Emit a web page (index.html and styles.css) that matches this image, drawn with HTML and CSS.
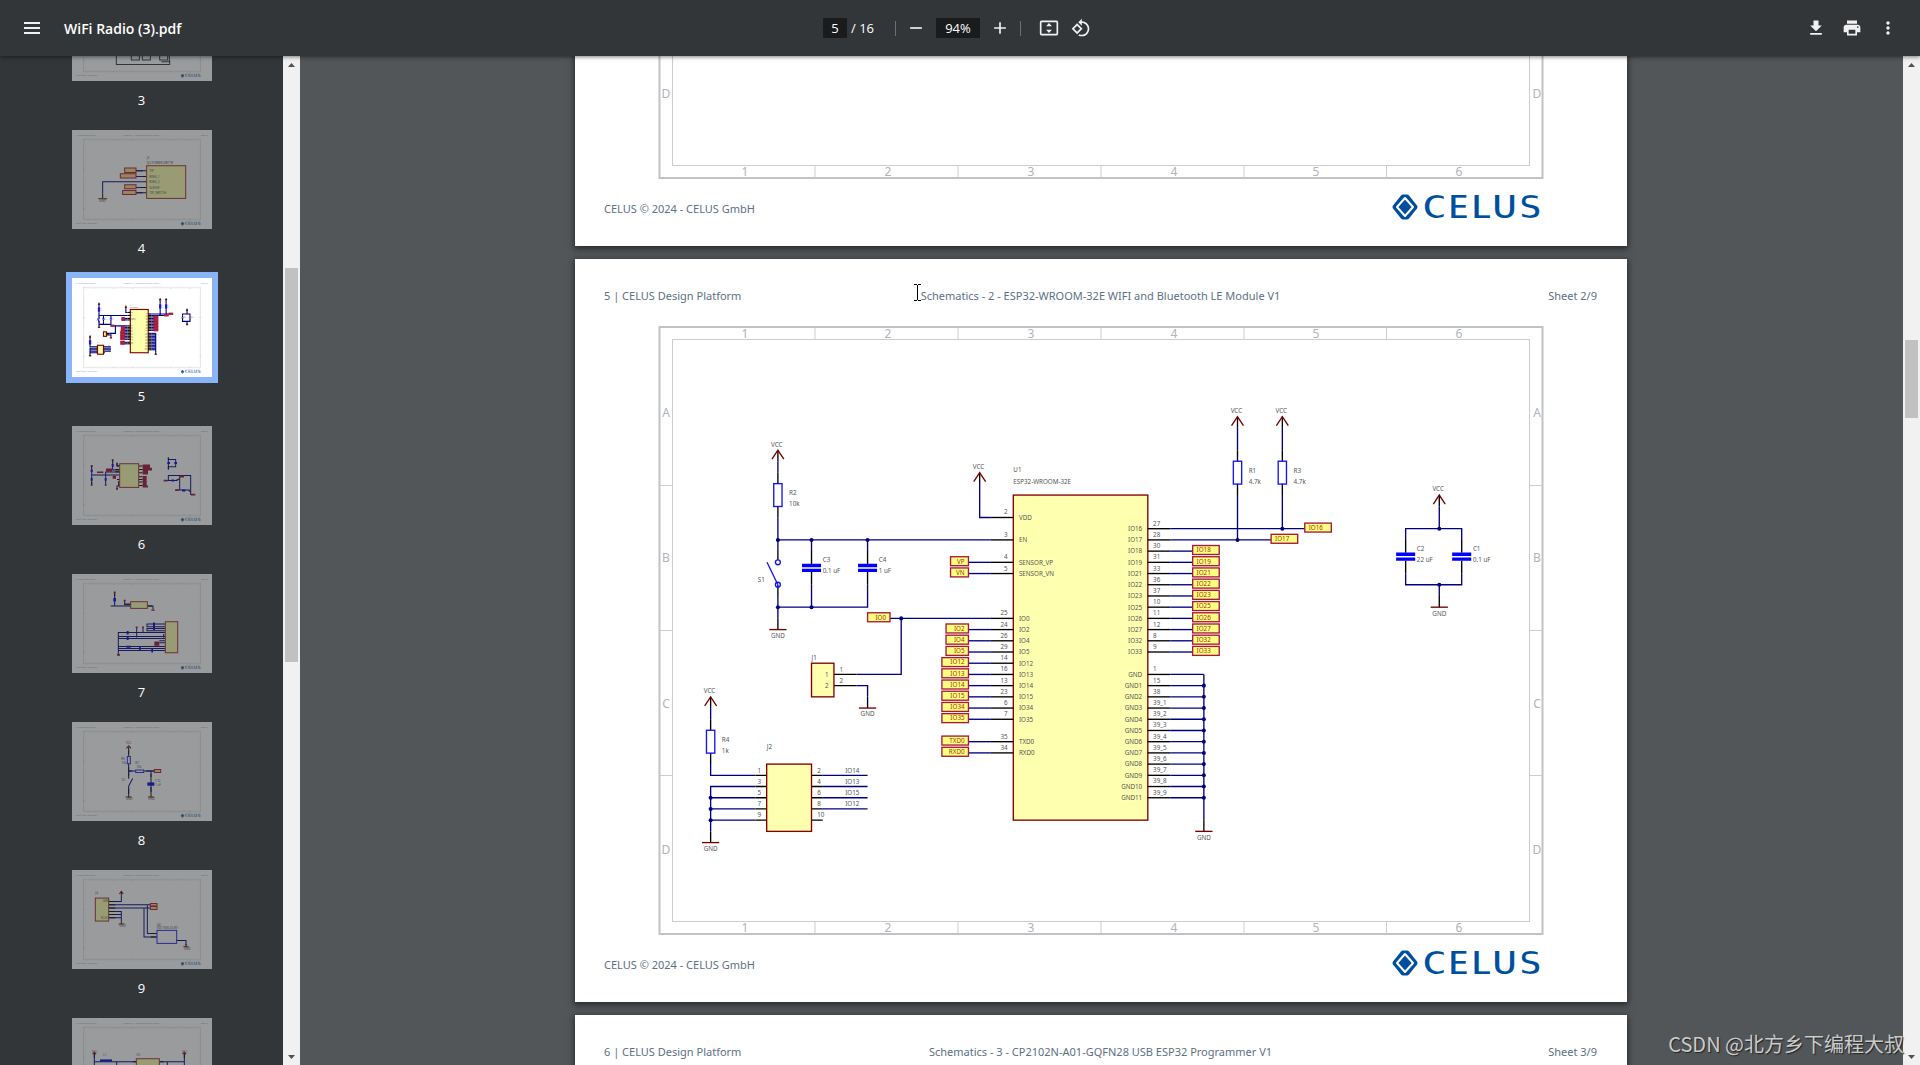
FILE: index.html
```
<!DOCTYPE html>
<html lang="en">
<head>
    <meta charset="UTF-8">
    <meta name="viewport" content="width=device-width, initial-scale=1.0">
    <title>WiFi Radio (3).pdf</title>
    <link rel="stylesheet" href="styles.css">
</head>
<body>

    <!-- shared drawings -->
    <svg class="defs" width="0" height="0" aria-hidden="true">
        <defs>
            <g id="frame">
                <rect class="frame-outer" x="84.500" y="68" width="883" height="607"/>
                <rect class="frame-inner" x="97.500" y="80.500" width="857" height="582"/>
                <path class="frame-tick" d="M240 68V80M383 68V80M526 68V80M669 68V80M811.500 68V80M240 663V675M383 663V675M526 663V675M669 663V675M811.500 663V675M85 226.500H97M85 371.500H97M85 516.500H97M955 226.500H967M955 371.500H967M955 516.500H967"/>
                <g class="frame-text">
                    <text x="170" y="79">1</text><text x="313" y="79">2</text><text x="456" y="79">3</text><text x="599" y="79">4</text><text x="741" y="79">5</text><text x="884" y="79">6</text>
                    <text x="170" y="673">1</text><text x="313" y="673">2</text><text x="456" y="673">3</text><text x="599" y="673">4</text><text x="741" y="673">5</text><text x="884" y="673">6</text>
                    <text x="91" y="158">A</text><text x="91" y="303">B</text><text x="91" y="449">C</text><text x="91" y="595">D</text>
                    <text x="962" y="158">A</text><text x="962" y="303">B</text><text x="962" y="449">C</text><text x="962" y="595">D</text>
                </g>
            </g>

            <g id="logo">
                <path d="M11 .500h4a3 3 0 0 1 2 1l8 10a2.500 2.500 0 0 1 0 3l-8 10a3 3 0 0 1-2 1h-4a3 3 0 0 1-2-1l-8-10a2.500 2.500 0 0 1 0-3l8-10a3 3 0 0 1 2-1z" fill="#004f9e"/>
                <path d="M13 4L21 13L13 22L5 13z" fill="#004f9e" stroke="#fff" stroke-width="2" stroke-linejoin="round"/>
                <text class="logo-text" x="30" y="25">CELUS</text>
            </g>

            <!-- schematic parts, in mil -->
            <g id="vcc">
                <text class="part mid" x="-10" y="-32">VCC</text>
                <path class="pin" d="M0 0V100"/>
                <path class="power" d="M-53 80L0 0L53 80"/>
            </g>
            <g id="gnd">
                <path class="pin" d="M0 -100V0"/>
                <path class="power" d="M-77 0H77"/>
                <text class="part mid" x="0" y="75">GND</text>
            </g>
            <g id="res">
                <path class="pin" d="M0 -200V-100M0 100V200"/>
                <rect class="body" x="-37" y="-102" width="74" height="204"/>
            </g>
            <g id="cap">
                <path class="pin" d="M0 -150V-36M0 36V150"/>
                <path class="plate" d="M-85 -37H85V-7H-85zM-85 7H85V37H-85z"/>
            </g>

            <g id="sheet5" transform="translate(438.300 269.700) scale(.1121)">
                <path class="wire" d="M-2100 -600V-500M-2100 -100V200M-2100 100H-200M-1800 100V200M-1300 100V200M-1800 500V700M-1300 500V700H-2100M-2100 600V800"/>
                <path class="wire" d="M-300 -400V-100H-200M-1100 800H-200M-1000 800V1300H-1400M-1400 1400H-1300V1500"/>
                <path class="wire" d="M-2700 1600V1700M-2700 2100V2200H-2300M-2300 2300H-2700V2700M-2700 2400H-2300M-2700 2500H-2300M-2700 2600H-2300M-1700 2200H-1300M-1700 2300H-1300M-1700 2400H-1300M-1700 2500H-1300"/>
                <path class="wire" d="M1400 0H2600M1400 100H2300M2000 -900V-700M2000 -300V100M2400 -900V-700M2400 -300V0M1700 1300V2600"/>
                <path class="wire" d="M3800 -200V0M3500 100V0H4000V100M3500 400V500H4000V400M3800 500V600"/>

                <use href="#vcc" x="-2100" y="-700"/>
                <use href="#vcc" x="-300" y="-500"/>
                <use href="#vcc" x="-2700" y="1500"/>
                <use href="#vcc" x="2000" y="-1000"/>
                <use href="#vcc" x="2400" y="-1000"/>
                <use href="#vcc" x="3800" y="-300"/>
                <use href="#gnd" x="-2100" y="900"/>
                <use href="#gnd" x="-1300" y="1600"/>
                <use href="#gnd" x="-2700" y="2800"/>
                <use href="#gnd" x="1700" y="2700"/>
                <use href="#gnd" x="3800" y="700"/>
                <use href="#res" x="-2100" y="-300"/>
                <use href="#res" x="-2700" y="1900"/>
                <use href="#res" x="2000" y="-500"/>
                <use href="#res" x="2400" y="-500"/>
                <use href="#cap" x="-1800" y="350"/>
                <use href="#cap" x="-1300" y="350"/>
                <use href="#cap" x="3500" y="250"/>
                <use href="#cap" x="4000" y="250"/>

                <!-- switch -->
                <path class="pin" d="M-2100 200V278M-2100 500V600"/>
                <path class="switch" d="M-2197 300L-2100 500"/>
                <circle class="switch" cx="-2100" cy="300" r="22"/>
                <circle class="switch" cx="-2100" cy="500" r="22"/>

                <!-- connectors and module -->
                <path class="pin" d="M-1600 1300H-1400M-1600 1400H-1400"/>
                <path class="pin" d="M-2300 2200H-2200M-2300 2300H-2200M-2300 2400H-2200M-2300 2500H-2200M-2300 2600H-2200M-1800 2200H-1700M-1800 2300H-1700M-1800 2400H-1700M-1800 2500H-1700M-1800 2600H-1700"/>
                <rect class="chip" x="-1800" y="1200" width="200" height="300"/>
                <rect class="chip" x="-2200" y="2100" width="400" height="600"/>
                <rect class="chip" x="0" y="-300" width="1200" height="2900"/>

                <text class="part" x="-2000" y="-300">R2</text><text class="part" x="-2000" y="-200">10k</text>
                <text class="part" x="-2600" y="1900">R4</text><text class="part" x="-2600" y="2000">1k</text>
                <text class="part" x="2100" y="-500">R1</text><text class="part" x="2100" y="-400">4.7k</text>
                <text class="part" x="2500" y="-500">R3</text><text class="part" x="2500" y="-400">4.7k</text>
                <text class="part" x="-1700" y="296">C3</text><text class="part" x="-1700" y="394">0.1 uF</text>
                <text class="part" x="-1200" y="296">C4</text><text class="part" x="-1200" y="394">1 uF</text>
                <text class="part" x="3600" y="196">C2</text><text class="part" x="3600" y="294">22 uF</text>
                <text class="part" x="4100" y="196">C1</text><text class="part" x="4100" y="294">0.1 uF</text>
                <text class="part" x="-2280" y="477">S1</text>
                <text class="part" x="-1800" y="1172">J1</text>
                <text class="part" x="-2200" y="1966">J2</text>
                <text class="part" x="0" y="-505">U1</text>
                <text class="part" x="0" y="-396">ESP32-WROOM-32E</text>
                <text class="part" x="-1680" y="1320">1</text><text class="part" x="-1680" y="1420">2</text>
                <text class="part" x="-1550" y="1275">1</text><text class="part" x="-1550" y="1380">2</text>
                <g id="pins"></g>
            </g>

            <!-- small sheets, only shown as thumbnails -->
            <g id="sheet3" class="mini" transform="scale(2.505)">
                <path class="m-gray" d="M133 180V247H293V235M178 215V234H202V215M211 215V234H235V215M263 210V234H287V210M268 239H292V215"/>
            </g>
            <g id="sheet4" class="mini" transform="scale(2.505)">
                <path class="m-black" d="M192 122H224M192 139H224M212 155H224M192 172H224M192 188H224M92 190V204"/>
                <path class="m-blue" d="M192 122H212M192 139H212M212 155H92V190M192 172H212M192 188H212"/>
                <path class="m-red" d="M79 206H105"/>
                <path class="m-label" d="M158 114H192V127H158zM145 131H192V144H145zM158 164H192V176H158zM152 181H192V193H152z"/>
                <rect class="m-chip" x="224" y="107" width="117" height="98"/>
                <text x="224" y="86">J3</text>
                <text x="224" y="102">SJ2-POWER-SWTTR</text>
                <text x="232" y="126">TIP</text><text x="232" y="143">RING_1</text><text x="232" y="159">RING_2</text><text x="232" y="176">SLEEVE</text><text x="232" y="192">TIP_SWITCH</text>
                <text x="82" y="216">GND</text>
            </g>
            <g id="sheet6" class="mini" transform="scale(2.505)">
                <path class="m-blue" d="M59 118V177M59 147H142M101 177V138H142M122 100V132H142M135 110V120H142M135 188V180H142M289 94V130M289 100H311V122H289M282 163H317M311 192H353M289 163V148H356V205H366M323 150V192M323 150H335"/>
                <path class="m-black" d="M59 118V126M59 168V177M122 100V108M135 110V119H144M130 130H144M130 137H144M135 160H144M140 165V180M200 120H212M200 130H212M200 140H212M200 152H212M200 160H212M200 168H212M200 178H212M289 94V100M289 122V130M311 163L323 158M350 192L356 198"/>
                <path class="m-fillblue" d="M56 130H62V138H56zM56 156H62V164H56zM98 156H104V164H98zM119 114H125V122H119zM286 108H294V114H286zM307 108H315V114H307zM298 160H306V166H298zM330 190H340V196H330z"/>
                <path class="m-fillred" d="M56 117H62V122H56zM56 175H62V179H56zM98 175H104V179H98zM75 136H94V141H75zM102 127H120V137H102zM122 149H132V158H122zM119 100H125V104H119zM132 186H138V191H132zM212 115H234V125H240V133H228V145H212zM212 150H224V178H228V184H212zM275 161H286V166H275zM309 190H320V195H309zM323 148H336V154H323zM357 203H370V208H357z"/>
                <rect class="m-chip" x="143" y="113" width="57" height="71"/>
            </g>
            <g id="sheet7" class="mini" transform="scale(2.505)">
                <path class="m-blue" d="M116 96H177M128 60V96M158 82V90H177M226 96H243V106M139 242V175H280M139 187H280M139 193H280M139 217H280M139 223H280M139 229H280M194 162V190M213 162V176M280 150H225V158H280M280 163H225V170H280M262 200H280M262 206H280"/>
                <path class="m-black" d="M156 92H177M226 96H240M275 180V190M128 54V66"/>
                <path class="m-fillblue" d="M124 72H132V82H124zM164 171H170V181H164zM164 189H170V198H164zM201 219H206V228H201zM238 225H243V235H238zM243 145H249V168H243zM163 215H176V221H163z"/>
                <path class="m-fillred" d="M125 52H131V58H125zM155 77H161V83H155zM238 106H248V110H238zM191 157H197V162H191zM210 157H216V162H210zM247 202H262V215H247zM135 240H144V245H135z"/>
                <rect class="m-chip" x="176" y="83" width="50" height="20"/>
                <rect class="m-chip" x="280" y="143" width="37" height="93"/>
            </g>
            <g id="sheet8" class="mini" transform="scale(2.505)">
                <path class="m-black" d="M170 75V102M170 126V170M170 192V226M190 147H170M216 147H248M237 155V225"/>
                <path class="m-blue" d="M170 85V95M170 135V162M170 200V215M170 147H180M222 147H246M237 147V165M237 195V210M170 192L182 169"/>
                <path class="m-part" d="M166 103H175V125H166zM191 144H215V151H191z"/>
                <path class="m-fillblue" d="M226 181H247V191H226z"/>
                <path class="m-red" d="M163 79L170 71L177 79M161 225H179M228 225H246"/>
                <path class="m-label" d="M247 142H266V151H247z"/>
                <text x="162" y="65">VCC</text><text x="148" y="114">R5</text><text x="148" y="125">10k</text><text x="190" y="126">R7</text><text x="193" y="137">10k</text><text x="149" y="176">S2</text><text x="249" y="181">C10</text><text x="249" y="192">1 uF</text><text x="162" y="234">GND</text><text x="229" y="234">GND</text>
            </g>
            <g id="sheet9" class="mini" transform="scale(2.505)">
                <path class="m-blue" d="M110 94H148V70M110 104H236M110 114H236M226 104V190H254M216 114V201H254M110 124H148V155M110 133H148M110 143H148M314 211H342V225"/>
                <path class="m-black" d="M110 94H130M110 104H130M110 114H130M110 124H130M110 133H130M110 143H130M236 190H254M236 201H254M314 211H330M148 65V72M148 155V162M342 222V230"/>
                <path class="m-red" d="M142 72L148 64L154 72M140 162H157M334 230H350"/>
                <path class="m-label" d="M235 100H255V108H235zM235 109H255V118H235z"/>
                <rect class="m-chip" x="70" y="84" width="40" height="69"/>
                <rect class="m-part" x="255" y="181" width="59" height="39"/>
                <text x="70" y="72">J4</text><text x="254" y="167">U4</text><text x="254" y="178">SSD1306-OLED</text><text x="92" y="97">GND</text><text x="86" y="146">SCLK</text><text x="142" y="172">GND</text><text x="336" y="240">GND</text>
            </g>
            <g id="sheet10" class="mini" transform="scale(2.505)">
                <path class="m-blue" d="M67 110V150M67 131H337M134 131V160M286 131V160M337 110V160"/>
                <path class="m-black" d="M67 105V120M337 105V120M182 131H194M262 131H275"/>
                <path class="m-fillblue" d="M84 124H120V131H84z"/>
                <path class="m-red" d="M62 109L67 102L72 109M332 109L337 102L342 109"/>
                <rect class="m-chip" x="193" y="122" width="69" height="50"/>
                <text x="94" y="114">L1</text><text x="193" y="114">U5</text><text x="60" y="104">VCC</text><text x="330" y="104">VCC</text>
            </g>
        </defs>
    </svg>

    <header class="toolbar">
        <div class="toolbar-left">
            <button class="menu-button" type="button" aria-label="Menu">
                <svg viewBox="0 0 24 24"><path d="M4 6h16v2H4zM4 11h16v2H4zM4 16h16v2H4z"/></svg>
            </button>
            <h1 class="file-name">WiFi Radio (3).pdf</h1>
        </div>
        <div class="toolbar-center">
            <input class="page-input" type="text" value="5" aria-label="Page number">
            <span class="page-total">/ 16</span>
            <span class="separator"></span>
            <button class="icon-button" type="button" aria-label="Zoom out">
                <svg viewBox="0 0 24 24"><path d="M5 11h14v2H5z"/></svg>
            </button>
            <input class="zoom-input" type="text" value="94%" aria-label="Zoom level">
            <button class="icon-button" type="button" aria-label="Zoom in">
                <svg viewBox="0 0 24 24"><path d="M19 13h-6v6h-2v-6H5v-2h6V5h2v6h6z"/></svg>
            </button>
            <span class="separator last"></span>
            <button class="icon-button" type="button" aria-label="Fit to page">
                <svg viewBox="0 0 24 24"><path fill-rule="evenodd" d="M3 3h18a2 2 0 0 1 2 2v14a2 2 0 0 1-2 2H3a2 2 0 0 1-2-2V5a2 2 0 0 1 2-2zM3 5v14h18V5zM12 6l3.500 4h-7zM12 18l-3.500-4h7z"/></svg>
            </button>
            <button class="icon-button" type="button" aria-label="Rotate counterclockwise">
                <svg viewBox="0 0 24 24"><path d="M7.340 6.410L.860 12.900l6.490 6.480 6.490-6.480-6.500-6.490zM3.690 12.900l3.660-3.660L11 12.900l-3.660 3.660-3.650-3.660zm15.670-6.260C17.610 4.880 15.300 4 13 4V.760L8.760 5 13 9.240V6c1.790 0 3.580.680 4.950 2.050 2.730 2.730 2.730 7.170 0 9.900C16.580 19.320 14.790 20 13 20c-.970 0-1.940-.210-2.840-.610l-1.490 1.490C10.020 21.620 11.510 22 13 22c2.300 0 4.610-.880 6.360-2.640 3.520-3.510 3.520-9.210 0-12.720z"/></svg>
            </button>
        </div>
        <div class="toolbar-right">
            <button class="icon-button" type="button" aria-label="Download">
                <svg viewBox="0 0 24 24"><path d="M19 9h-4V3H9v6H5l7 7 7-7zM5 18v2h14v-2H5z"/></svg>
            </button>
            <button class="icon-button" type="button" aria-label="Print">
                <svg viewBox="0 0 24 24"><path d="M19 8H5c-1.660 0-3 1.340-3 3v6h4v4h12v-4h4v-6c0-1.660-1.340-3-3-3zm-3 11H8v-5h8v5zm3-7c-.550 0-1-.450-1-1s.450-1 1-1 1 .450 1 1-.450 1-1 1zm-1-9H6v4h12V3z"/></svg>
            </button>
            <button class="icon-button" type="button" aria-label="More actions">
                <svg viewBox="0 0 24 24"><path d="M12 8c1.100 0 2-.900 2-2s-.900-2-2-2-2 .900-2 2 .900 2 2 2zm0 2c-1.100 0-2 .900-2 2s.900 2 2 2 2-.900 2-2-.900-2-2-2zm0 6c-1.100 0-2 .900-2 2s.900 2 2 2 2-.900 2-2-.900-2-2-2z"/></svg>
            </button>
        </div>
    </header>

    <div class="content">
        <aside class="sidebar">
            <nav class="thumbs" id="thumbs" aria-label="Page thumbnails"></nav>
            <div class="scrollbar thumbs-bar">
                <span class="arrow up"></span>
                <span class="track"><span class="handle"></span></span>
                <span class="arrow down"></span>
            </div>
        </aside>

        <main class="viewer">
            <div class="pages" id="pages">
                <article class="page">
                    <header class="page-head">
                        <span>4 | CELUS Design Platform</span>
                        <span>Schematics - 1 - Audio Jack V1</span>
                        <span>Sheet 1/9</span>
                    </header>
                    <svg class="drawing" viewBox="0 60 1052 622">
                        <use href="#frame"/>
                    </svg>
                    <footer class="page-foot">
                        <span>CELUS © 2024 - CELUS GmbH</span>
                        <svg class="logo" viewBox="0 0 156 26"><use href="#logo"/></svg>
                    </footer>
                </article>

                <article class="page">
                    <header class="page-head">
                        <span>5 | CELUS Design Platform</span>
                        <span>Schematics - 2 - ESP32-WROOM-32E WIFI and Bluetooth LE Module V1</span>
                        <span>Sheet 2/9</span>
                    </header>
                    <svg class="drawing" viewBox="0 60 1052 622">
                        <use href="#frame"/>
                        <use href="#sheet5"/>
                    </svg>
                    <footer class="page-foot">
                        <span>CELUS © 2024 - CELUS GmbH</span>
                        <svg class="logo" viewBox="0 0 156 26"><use href="#logo"/></svg>
                    </footer>
                    <svg class="text-cursor" viewBox="0 0 7 17"><path d="M0 .500H3M4 .500H7M3.500 1V16M0 16.500H3M4 16.500H7"/></svg>
                </article>

                <article class="page">
                    <header class="page-head">
                        <span>6 | CELUS Design Platform</span>
                        <span>Schematics - 3 - CP2102N-A01-GQFN28 USB ESP32 Programmer V1</span>
                        <span>Sheet 3/9</span>
                    </header>
                    <svg class="drawing" viewBox="0 60 1052 622">
                        <use href="#frame"/>
                    </svg>
                    <footer class="page-foot">
                        <span>CELUS © 2024 - CELUS GmbH</span>
                        <svg class="logo" viewBox="0 0 156 26"><use href="#logo"/></svg>
                    </footer>
                </article>
            </div>
            <div class="scrollbar pages-bar">
                <span class="arrow up"></span>
                <span class="track"><span class="handle"></span></span>
                <span class="arrow down"></span>
            </div>
            <span class="watermark">CSDN @北方乡下编程大叔</span>
        </main>
    </div>

    <script src="script.js"></script>
</body>
</html>
```
FILE: styles.css
```
* {
    box-sizing: border-box;
}

body {
    margin: 0;
    height: 100vh;
    display: flex;
    flex-direction: column;
    overflow: hidden;
    background: #525659;
    font-family: "Open Sans", "Noto Sans", sans-serif;
}

.defs {
    position: absolute;
}

/* toolbar */
.toolbar {
    display: grid;
    grid-template-columns: 1fr auto 1fr;
    align-items: center;
    height: 56px;
    flex: none;
    background: #323639;
    color: #fff;
    z-index: 2;
    box-shadow: 0 1px 4px rgba(0, 0, 0, 0.5);
}

.toolbar-left,
.toolbar-center,
.toolbar-right {
    display: flex;
    align-items: center;
}

.toolbar-left {
    padding-left: 16px;
    gap: 16px;
}

.toolbar-center {
    gap: 4px;
    font-size: 13px;
}

.toolbar-right {
    justify-content: flex-end;
    gap: 4px;
    padding-right: 16px;
}

.file-name {
    margin: 0;
    font-size: 14px;
    font-weight: 600;
}

.menu-button,
.icon-button {
    width: 32px;
    height: 32px;
    padding: 4px;
    border: 0;
    background: none;
    display: flex;
    align-items: center;
    justify-content: center;
}

.icon-button {
    padding: 6px;
}

.toolbar-center .icon-button + .icon-button {
    margin-left: -4px;
}

.menu-button svg,
.icon-button svg {
    width: 100%;
    height: 100%;
    fill: #f1f1f1;
}

.page-input,
.zoom-input {
    height: 20px;
    padding: 0;
    border: 0;
    background: #191b1c;
    color: #fff;
    font: inherit;
    text-align: center;
}

.page-input {
    width: 24px;
}

.zoom-input {
    width: 44px;
}

.page-total {
    width: 24px;
    white-space: nowrap;
}

.separator {
    width: 1px;
    height: 15px;
    margin-left: 16px;
    background: #6d7073;
}

.separator.last {
    margin: 0 8px 0 0;
}

/* columns below the toolbar */
.content {
    flex: 1;
    min-height: 0;
    display: flex;
}

.sidebar {
    width: 300px;
    display: flex;
    background: #323639;
}

.thumbs,
.pages {
    flex: 1;
    overflow-y: scroll;
    scrollbar-width: none;
    display: flex;
    flex-direction: column;
    align-items: center;
}

.viewer {
    flex: 1;
    min-width: 0;
    display: flex;
    position: relative;
}

/* thumbnails */
.thumb {
    flex: none;
    height: 148px;
    color: #fff;
    font-size: 13px;
    line-height: 20px;
    text-align: center;
    text-decoration: none;
}

.thumb svg {
    display: block;
    width: 140px;
    height: 99px;
    margin-bottom: 9px;
    background: #fff;
    opacity: 0.5;
    --line: 75;
    --frame: 3;
}

.thumb.current svg {
    opacity: 1;
    box-shadow: 0 0 0 6px #8ab4f8;
}

.thumb-text {
    font: 12px "Noto Sans", sans-serif;
    fill: #8d99a6;
}

/* scrollbars */
.scrollbar {
    width: 17px;
    flex: none;
    display: flex;
    flex-direction: column;
    align-items: center;
    background: #f1f1f1;
}

.arrow {
    width: 7px;
    height: 4px;
    margin: 7px 0 6px;
    background: #505050;
    clip-path: polygon(50% 0, 100% 100%, 0 100%);
}

.arrow.down {
    clip-path: polygon(0 0, 100% 0, 50% 100%);
}

.track {
    flex: 1;
    width: 13px;
    display: grid;
}

.handle {
    grid-row: 2;
    background: #c1c1c1;
}

.thumbs-bar .track {
    grid-template-rows: 195fr 394fr 386fr;
}

.pages-bar .track {
    grid-template-rows: 269fr 78fr 635fr;
}

/* document pages */
.pages {
    gap: 13px;
    padding-right: 1px;
}

.page {
    flex: none;
    width: 100%;
    max-width: 1052px;
    display: flex;
    flex-direction: column;
    position: relative;
    background: #fff;
    box-shadow: 0 2px 6px 1px rgba(0, 0, 0, 0.5);
    color: #5c7086;
    font: 11px/20px "Noto Sans", sans-serif;
}

.page-head {
    display: grid;
    grid-template-columns: 1fr auto 1fr;
    padding: 27px 30px 13px 29px;
}

.page-head span:last-child {
    text-align: right;
}

.drawing {
    display: block;
    width: 100%;
}

.page-foot {
    display: flex;
    justify-content: space-between;
    align-items: flex-end;
    padding: 9px 79px 26px 29px;
    line-height: 22px;
}

.logo {
    width: 156px;
    height: 26px;
    overflow: visible;
}

/* the white outline thins the bold letters */
.logo-text {
    font: bold 34px "DejaVu Sans", sans-serif;
    fill: #004f9e;
    stroke: #fff;
    stroke-width: 2;
}

.text-cursor {
    position: absolute;
    left: 339px;
    top: 25px;
    width: 7px;
    height: 17px;
    stroke: #000;
    fill: none;
}

/* sheet frame */
.frame-outer {
    fill: none;
    stroke: #bfc2c6;
    stroke-width: var(--frame, 2);
}

.frame-inner,
.frame-tick {
    fill: none;
    stroke: #cbcdd0;
    stroke-width: 1;
}

.frame-text {
    font: 12px "Noto Sans", sans-serif;
    fill: #b0b3b7;
    text-anchor: middle;
}

/* schematic */
.wire,
.pin,
.power,
.body,
.switch,
.chip,
.label {
    fill: none;
    stroke-width: var(--line, 12);
}

.wire {
    stroke: #000084;
}

.pin {
    stroke: #000;
}

.power {
    stroke: #720000;
}

.body,
.switch {
    stroke: #1414f0;
}

.plate {
    fill: #0000ff;
}

.dot {
    fill: #000084;
}

.chip {
    fill: #ffffb0;
    stroke: #840000;
}

.label {
    fill: #ffff80;
    stroke: #a8183c;
}

.part,
.label-text {
    font: 56px "Noto Sans", sans-serif;
    fill: #555;
}

.label-text {
    fill: #a03414;
}

.mid {
    text-anchor: middle;
}

.end {
    text-anchor: end;
}

/* thumbnail-only drawings */
.mini path,
.mini rect {
    fill: none;
    stroke-width: 3;
}

.mini text {
    font: 9px "Noto Sans", sans-serif;
    fill: #555;
}

.mini .m-gray {
    stroke: #333;
}

.mini .m-blue {
    stroke: #000084;
}

.mini .m-black {
    stroke: #000;
}

.mini .m-red {
    stroke: #840000;
}

.mini .m-part {
    stroke: #2222ee;
}

.mini .m-fillblue {
    fill: #0000ee;
}

.mini .m-fillred {
    fill: #a01030;
}

.mini .m-chip {
    fill: #ffffb0;
    stroke: #a03030;
}

.mini .m-label {
    fill: #ffd880;
    stroke: #a8183c;
}

.watermark {
    position: absolute;
    right: 16px;
    bottom: 7px;
    color: #c9cbcc;
    font: 20px/28px "Noto Sans CJK SC", sans-serif;
    text-shadow: 1px 1px 1px #222;
}
```
FILE: script.js
```
const SVG_NS = 'http://www.w3.org/2000/svg';

// [number, name, row]
const leftPins = [
    ['2', 'VDD', -1], ['3', 'EN', 1], ['4', 'SENSOR_VP', 3], ['5', 'SENSOR_VN', 4],
    ['25', 'IO0', 8], ['24', 'IO2', 9], ['26', 'IO4', 10], ['29', 'IO5', 11],
    ['14', 'IO12', 12], ['16', 'IO13', 13], ['13', 'IO14', 14], ['23', 'IO15', 15],
    ['6', 'IO34', 16], ['7', 'IO35', 17], ['35', 'TXD0', 19], ['34', 'RXD0', 20]
];
const rightPins = [
    ['27', 'IO16', 0], ['28', 'IO17', 1], ['30', 'IO18', 2], ['31', 'IO19', 3],
    ['33', 'IO21', 4], ['36', 'IO22', 5], ['37', 'IO23', 6], ['10', 'IO25', 7],
    ['11', 'IO26', 8], ['12', 'IO27', 9], ['8', 'IO32', 10], ['9', 'IO33', 11],
    ['1', 'GND', 13], ['15', 'GND1', 14], ['38', 'GND2', 15], ['39_1', 'GND3', 16],
    ['39_2', 'GND4', 17], ['39_3', 'GND5', 18], ['39_4', 'GND6', 19], ['39_5', 'GND7', 20],
    ['39_6', 'GND8', 21], ['39_7', 'GND9', 22], ['39_8', 'GND10', 23], ['39_9', 'GND11', 24]
];
const labelWidth = { 2: 160, 3: 200, 4: 237 };
const dots = [
    [-2100, 100], [-1800, 100], [-1300, 100], [-2100, 700], [-1800, 700], [-1000, 800],
    [-2700, 2400], [-2700, 2500], [-2700, 2600], [2000, 100], [2400, 0], [3800, 0], [3800, 500]
];

function add(parent, tag, attrs, text) {
    const el = document.createElementNS(SVG_NS, tag);
    for (const key in attrs) {
        el.setAttribute(key, attrs[key]);
    }
    if (text) el.textContent = text;
    parent.appendChild(el);
}

function addLabel(parent, name, x, y, side) {
    const width = labelWidth[name.length];
    const left = side === 'left';
    add(parent, 'rect', { class: 'label', x: left ? x - width : x, y: y - 50, width: width, height: 80 });
    add(parent, 'text', {
        class: left ? 'label-text end' : 'label-text',
        x: left ? x - 35 : x + 35,
        y: y + 11
    }, name);
}

function drawPins() {
    const g = document.getElementById('pins');

    leftPins.forEach(([num, name, row]) => {
        const y = row * 100;
        add(g, 'path', { class: 'pin', d: `M-200 ${y}H0` });
        add(g, 'text', { class: 'part end', x: -50, y: y - 27 }, num);
        add(g, 'text', { class: 'part', x: 50, y: y + 21 }, name);
        if (row > 2 && row !== 8) {
            add(g, 'path', { class: 'wire', d: `M-400 ${y}H-200` });
            addLabel(g, name.replace('SENSOR_', ''), -400, y, 'left');
        }
    });
    addLabel(g, 'IO0', -1100, 800, 'left');

    rightPins.forEach(([num, name, row]) => {
        const y = row * 100;
        add(g, 'path', { class: 'pin', d: `M1200 ${y}H1400` });
        add(g, 'text', { class: 'part', x: 1247, y: y - 27 }, num);
        add(g, 'text', { class: 'part end', x: 1150, y: y + 21 }, name);
        if (row > 12) {
            add(g, 'path', { class: 'wire', d: `M1400 ${y}H1700` });
            if (row > 13) dots.push([1700, y]);
        } else if (row > 1) {
            add(g, 'path', { class: 'wire', d: `M1400 ${y}H1600` });
            addLabel(g, name, 1600, y, 'right');
        }
    });
    addLabel(g, 'IO16', 2600, 0, 'right');
    addLabel(g, 'IO17', 2300, 100, 'right');

    // J2 header
    ['IO14', 'IO13', 'IO15', 'IO12', ''].forEach((net, i) => {
        const y = 2175 + i * 100;
        add(g, 'text', { class: 'part end', x: -2250, y: y }, String(i * 2 + 1));
        add(g, 'text', { class: 'part', x: -1750, y: y }, String(i * 2 + 2));
        if (net) add(g, 'text', { class: 'part', x: -1500, y: y }, net);
    });

    dots.forEach(([x, y]) => add(g, 'circle', { class: 'dot', cx: x, cy: y, r: 18 }));
}

function drawThumbs() {
    let html = '';
    for (let n = 3; n <= 10; n++) {
        html += `
            <a class="thumb${n === 5 ? ' current' : ''}" href="#page${n}" aria-label="Page ${n}">
                <svg viewBox="0 0 1052 743">
                    <use href="#frame"/>
                    <use href="#sheet${n}"/>
                    <text class="thumb-text" x="29" y="41">${n} | CELUS Design Platform</text>
                    <text class="thumb-text mid" x="526" y="41">Schematics - ${n - 3} - CELUS Design Platform Module V1</text>
                    <text class="thumb-text end" x="1022" y="41">Sheet ${n - 3}/9</text>
                    <text class="thumb-text" x="29" y="709">CELUS © 2024 - CELUS GmbH</text>
                    <use href="#logo" x="817" y="691"/>
                </svg>
                ${n}
            </a>`;
    }
    document.getElementById('thumbs').innerHTML = html;
}

drawPins();
drawThumbs();

// open on page 5
document.getElementById('thumbs').scrollTop = 74;
document.getElementById('pages').scrollTop = 553;
```
